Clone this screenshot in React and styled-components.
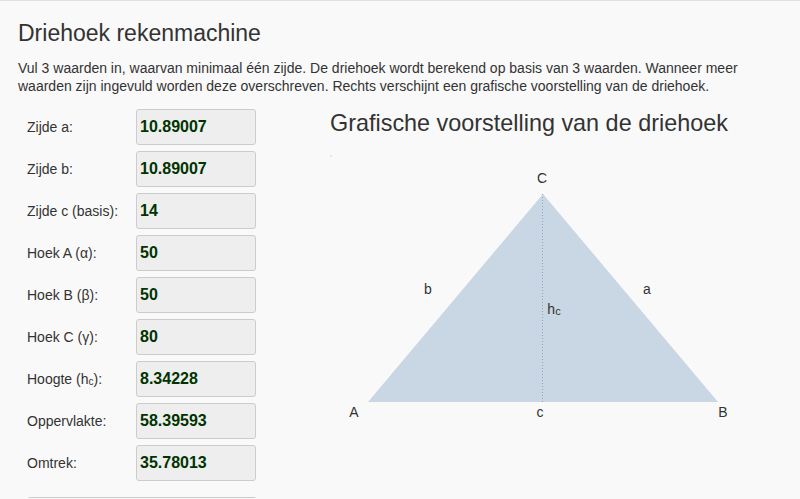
import React from "react";
import styled, { createGlobalStyle } from "styled-components";

const rows = [
  { label: "Zijde a:", value: "10.89007" },
  { label: "Zijde b:", value: "10.89007" },
  { label: "Zijde c (basis):", value: "14" },
  { label: "Hoek A (α):", value: "50" },
  { label: "Hoek B (β):", value: "50" },
  { label: "Hoek C (γ):", value: "80" },
  { label: <>Hoogte (h<Sub>c</Sub>):</>, value: "8.34228" },
  { label: "Oppervlakte:", value: "58.39593" },
  { label: "Omtrek:", value: "35.78013" },
];

function Sub({ children }) {
  return <SubText>{children}</SubText>;
}

const App = () => {
  return (
    <Page>
      <GlobalStyle />
      <Title>Driehoek rekenmachine</Title>
      <Intro>
        Vul 3 waarden in, waarvan minimaal één zijde. De driehoek wordt berekend op basis van 3 waarden. Wanneer meer
        waarden zijn ingevuld worden deze overschreven. Rechts verschijnt een grafische voorstelling van de driehoek.
      </Intro>
      <Columns>
        <Form>
          {rows.map((row, i) => (
            <Row key={i}>
              <Label>{row.label}</Label>
              <Field>{row.value}</Field>
            </Row>
          ))}
          <Button />
        </Form>
        <Drawing>
          <SubTitle>Grafische voorstelling van de driehoek</SubTitle>
          <Triangle />
        </Drawing>
      </Columns>
    </Page>
  );
};

// Triangle drawing, origin at the canvas corner (the tiny grey dot)
const Triangle = () => (
  <Svg width="440" height="290" viewBox="0 0 440 290">
    <rect x="0" y="0" width="2" height="2" fill="#e4e4e4" />
    <polygon points="38,247 388,247 213,39" fill="#c9d6e3" />
    <line x1="212.5" y1="39" x2="212.5" y2="247" stroke="#8ea6bf" strokeWidth="1" strokeDasharray="1,2" />
    <g fill="#333" fontSize="14" fontFamily="'Liberation Sans', Arial, sans-serif" textAnchor="middle">
      <text x="212" y="28">C</text>
      <text x="98" y="139">b</text>
      <text x="317" y="139">a</text>
      <text x="224" y="159">h<tspan fontSize="11" dy="1">c</tspan></text>
      <text x="24" y="262">A</text>
      <text x="210" y="262">c</text>
      <text x="393" y="262">B</text>
    </g>
  </Svg>
);

// ----------------- Styled Components -----------------

const GlobalStyle = createGlobalStyle`
  html, body {
    margin: 0;
    padding: 0;
    background: #f9f9f9;
  }
  body {
    font-family: "Liberation Sans", Arial, sans-serif;
    color: #333;
    overflow: hidden;
  }
`;

const Page = styled.div`
  border-top: 1px solid #e0e0e0;
  padding: 16px 18px 0 18px;
  height: 498px;
  box-sizing: border-box;
  overflow: hidden;
`;

const Title = styled.h1`
  margin: 0;
  font-size: 23px;
  font-weight: normal;
  line-height: 33px;
  color: #333;
`;

const Intro = styled.p`
  margin: 9px 0 0 0;
  font-size: 14px;
  line-height: 18px;
  color: #333;
`;

const Columns = styled.div`
  display: flex;
  margin-top: 14px;
`;

const Form = styled.div`
  box-sizing: border-box;
  width: 312px;
  flex: none;
  padding-left: 9px;
  display: flex;
  flex-direction: column;
  gap: 6px;
`;

const Row = styled.div`
  display: flex;
  align-items: center;
  height: 36px;
`;

const Label = styled.div`
  width: 109px;
  font-size: 14px;
  color: #333;
`;

const SubText = styled.span`
  font-size: 10px;
  vertical-align: -1px;
`;

const Field = styled.div`
  box-sizing: border-box;
  width: 120px;
  height: 36px;
  line-height: 34px;
  padding-left: 3px;
  background: #eee;
  border: 1px solid #ccc;
  border-radius: 3px;
  font-size: 16px;
  font-weight: bold;
  color: #003300;
`;

const Button = styled.div`
  margin-top: 10px;
  width: 228px;
  height: 34px;
  border: 1px solid #ccc;
  border-radius: 3px;
  background: #f5f5f5;
`;

const Drawing = styled.div`
  display: flex;
  flex-direction: column;
`;

const SubTitle = styled.h2`
  margin: 0;
  font-size: 23.4px;
  font-weight: normal;
  line-height: 28px;
  color: #333;
`;

const Svg = styled.svg`
  display: block;
  margin-top: 18px;
`;

export default App;
